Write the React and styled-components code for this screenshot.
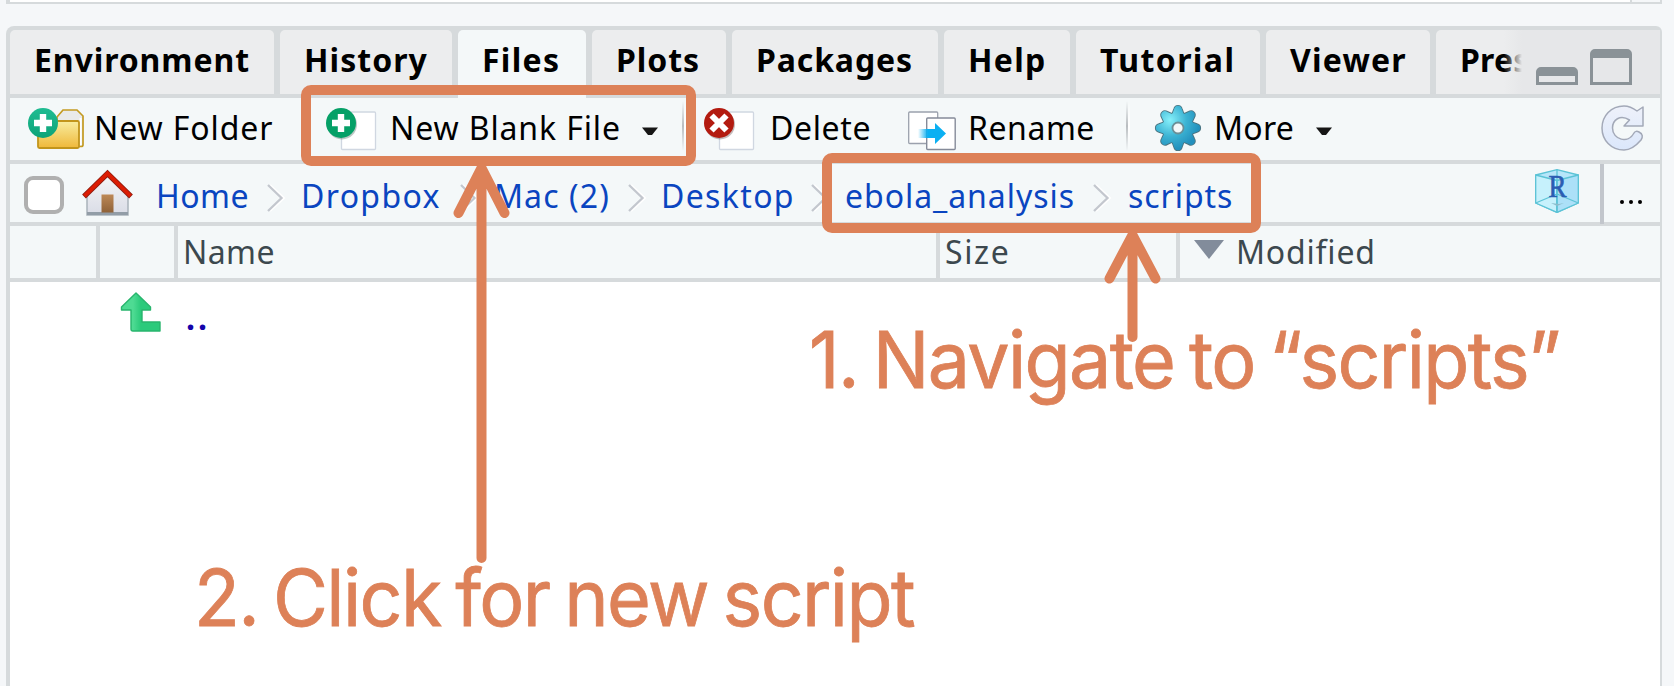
import React from 'react';
import styled, { createGlobalStyle, css } from 'styled-components';

const LINE = '#d6dadc';
const PANEL = '#f4f8f9';
const ORANGE = '#dd8158';

const GlobalStyle = createGlobalStyle`
  * { box-sizing: border-box; }
  body { margin: 0; overflow: hidden; background: #f5f7f9; }
`;

const Screen = styled.div`
  position: relative;
  width: 1674px;
  height: 686px;
  overflow: hidden;
  padding-left: 6px;
  font-family: 'Noto Sans', 'Open Sans', sans-serif;
  font-size: 32px;
  line-height: 44px;
  color: #000;
  background: #f5f7f9;
`;

const UpperPane = styled.div`
  display: flex;
  justify-content: flex-end;
  width: 1656px;
  height: 4px;
  margin-bottom: 22px;
  border: solid ${LINE};
  border-width: 0 2px 2px 4px;
  background: #fff;
`;

const ScrollGutter = styled.div`
  width: 30px;
  border-left: 2px solid ${LINE};
  background: #f5f7f9;
`;

const Pane = styled.section`
  display: flex;
  flex-direction: column;
  width: 1656px;
  height: 660px;
  border: solid ${LINE};
  border-width: 4px 2px 0 4px;
  border-radius: 8px 6px 0 0;
  background: #fff;
`;

const TabStrip = styled.nav`
  display: flex;
  flex: none;
  height: 68px;
  background: ${LINE};
`;

const Tab = styled.div`
  flex: none;
  width: ${p => p.$w}px;
  height: ${p => (p.$active ? 68 : 64)}px;
  margin-right: 6px;
  padding: 8px 0 0 ${p => p.$pad ?? 24}px;
  border-radius: 5px 5px 0 0;
  background: ${p => (p.$active ? PANEL : '#ecedee')};
  font-weight: 700;
  letter-spacing: ${p => p.$ls}px;
  white-space: nowrap;
`;

const WindowButtons = styled.div`
  position: relative;
  z-index: 1;
  display: flex;
  flex: none;
  align-items: flex-end;
  gap: 12px;
  width: 156px;
  height: 64px;
  margin-left: -44px;
  padding: 0 0 9px 32px;
  background: linear-gradient(90deg, #e6e7e900, #e6e7e9 18px);
`;

const WindowGlyph = styled.div`
  width: 42px;
  height: ${p => p.$h}px;
  border: 3px solid #8a9297;
  border-top-width: 9px;
  border-radius: 5px 5px 0 0;
`;

const bar = css`
  display: flex;
  flex: none;
  background: ${PANEL};
  border-bottom: 4px solid ${LINE};
`;

const Toolbar = styled.div`
  ${bar}
  height: 66px;
`;

const PathBar = styled.div`
  ${bar}
  height: 62px;
`;

const Slot = styled.div`
  flex: none;
  width: ${p => p.$w}px;
  padding-top: ${p => p.$top ?? 0}px;
  svg { display: block; overflow: visible; }
`;

const Label = styled.div`
  flex: none;
  width: ${p => p.$w}px;
  padding: 8px 0 0 1px;
  letter-spacing: ${p => p.$ls ?? 0.5}px;
  white-space: nowrap;
`;

const Crumb = styled(Label)`
  padding-top: 10px;
  color: #0a45c0;
`;

const Separator = styled.div`
  flex: none;
  width: 4px;
  height: 50px;
  margin: 3px ${p => p.$mr}px 0 0;
  background: linear-gradient(90deg, #b9bdc0 0 50%, #fff 50%);
  mask-image: linear-gradient(transparent, #000 50%, transparent);
`;

const CheckBox = styled.div`
  flex: none;
  width: 40px;
  height: 38px;
  margin: 12px 18px 0 14px;
  border: 4px solid #b0b0b0;
  border-radius: 9px;
  background: #fff;
`;

const Browse = styled.div`
  flex: none;
  display: flex;
  gap: 5px;
  width: 60px;
  height: 60px;
  padding: 36px 0 0 16px;
  border-left: 4px solid #c2c6cc;
`;

const Dot = styled.i`
  width: 4px;
  height: 4px;
  border-radius: 50%;
  background: #000;
`;

const HeaderRow = styled.div`
  ${bar}
  height: 56px;
  color: #3c484e;
`;

const HeaderCell = styled.div`
  display: flex;
  flex: none;
  gap: 12px;
  width: ${p => p.$w}px;
  padding: 4px 0 0 ${p => p.$pad ?? 5}px;
  border-right: ${p => (p.$last ? 0 : 4)}px solid ${LINE};
  letter-spacing: ${p => p.$ls ?? 0.4}px;
`;

const SortMark = styled.svg`
  display: block;
  margin-top: 10px;
`;

const FileRow = styled.div`
  display: flex;
  padding: 10px 0 0 111px;
  svg { display: block; overflow: visible; }
`;

const ParentLink = styled.span`
  margin: 4px 0 0 25px;
  color: #1404aa;
  font-weight: 700;
  letter-spacing: 3px;
`;

const MarkupLayer = styled.div`
  position: absolute;
  inset: 0;
  z-index: 5;
  pointer-events: none;
`;

const Arrows = styled.svg`
  position: absolute;
  inset: 0;
`;

const Note = styled.div`
  position: absolute;
  left: ${p => p.$x}px;
  top: ${p => p.$y}px;
  color: ${ORANGE};
  font: 400 78px/90px Inter, sans-serif;
  letter-spacing: -1.7px;
  word-spacing: -5px;
  white-space: nowrap;
  -webkit-text-stroke: 0.8px ${ORANGE};
  transform: scaleX(0.965);
  transform-origin: left;
`;

const tabs = [
  ['Environment', 264, 0.9],
  ['History', 172, 1.05],
  ['Files', 128, 1.3, true],
  ['Plots', 134, 0.95],
  ['Packages', 206, 0.87],
  ['Help', 126, 1.3],
  ['Tutorial', 184, 1.4],
  ['Viewer', 164, 1.2],
];

const AddBadge = ({ fill }) => (
  <g>
    <circle cx="15" cy="15" r="15" fill={fill} />
    <path d="M15 6v18M6 15h18" stroke="#fff" strokeWidth="6.4" />
  </g>
);

const FolderIcon = () => (
  <svg width="56" height="42" viewBox="0 0 56 42">
    <defs>
      <linearGradient id="folder" x2="0" y2="1"><stop stopColor="#f8eda0" /><stop offset="1" stopColor="#efb83a" /></linearGradient>
      <linearGradient id="addG" x2="0" y2="1"><stop stopColor="#1fbc92" /><stop offset="1" stopColor="#0da378" /></linearGradient>
    </defs>
    <path d="M29 9 35 2h14l6 6v29q0 1.500-2 1.500H29Z" fill="#e9eaea" stroke="#c49b22" strokeWidth="1.700" />
    <path d="M52.600 10v27" stroke="#fff" strokeWidth="2" />
    <rect x="10" y="13" width="41" height="27" rx="1.500" fill="url(#folder)" stroke="#c2951c" strokeWidth="1.800" />
    <AddBadge fill="url(#addG)" />
  </svg>
);

const PageBase = () => <rect x="15.500" y="4" width="34" height="37.500" rx="1" fill="#fff" stroke="#d0d7e1" strokeWidth="1.300" />;

const NewFileIcon = () => (
  <svg width="51" height="43" viewBox="0 0 51 43">
    <PageBase />
    <circle cx="16" cy="16.500" r="15" fill="#46605a" opacity=".35" />
    <AddBadge fill="#05a067" />
  </svg>
);

const DeleteIcon = () => (
  <svg width="51" height="43" viewBox="0 0 51 43">
    <PageBase />
    <circle cx="16" cy="16.500" r="15" fill="#5a4040" opacity=".35" />
    <circle cx="15" cy="15" r="15" fill="#b31b10" />
    <path d="m7.500 7.500 15 15m0-15-15 15" stroke="#fff" strokeWidth="6" />
  </svg>
);

const RenameIcon = () => (
  <svg width="48" height="40" viewBox="0 0 48 40">
    <defs><linearGradient id="fade"><stop stopColor="#0bb0f2" stopOpacity="0" /><stop offset=".35" stopColor="#0bb0f2" /></linearGradient></defs>
    <rect x=".700" y="1" width="29" height="31.500" rx="1" fill="#fff" stroke="#9ba1ad" strokeWidth="1.300" />
    <rect x="18.700" y="7" width="28.500" height="31.500" rx="1" fill="#fff" stroke="#858b99" strokeWidth="1.400" />
    <path d="M10 18h17v-6l11 10.500L27 33v-6H10Z" fill="url(#fade)" />
  </svg>
);

const GEAR_ANGLES = [0, 45, 90, 135, 180, 225, 270, 315];
const TOOTH = 'M17 10 19.200 4Q20 .800 23 .800T26.800 4L29 10Z';
const GearIcon = () => (
  <svg width="46" height="46" viewBox="0 0 46 46">
    <defs>
      <radialGradient id="gear" gradientUnits="userSpaceOnUse" cx="15" cy="15" r="30">
        <stop stopColor="#86f0fa" /><stop offset=".55" stopColor="#3cb3d3" /><stop offset="1" stopColor="#2390bd" />
      </radialGradient>
      <mask id="gearShape" maskUnits="userSpaceOnUse" x="0" y="0" width="46" height="46">
        <g fill="#fff">
          <circle cx="23" cy="23" r="15.500" />
          {GEAR_ANGLES.map(a => <path key={a} transform={`rotate(${a} 23 23)`} d={TOOTH} />)}
        </g>
      </mask>
    </defs>
    <g fill="none" stroke="#4b7480" strokeWidth="1.800">
      <circle cx="23" cy="23" r="15.500" />
      {GEAR_ANGLES.map(a => <path key={a} transform={`rotate(${a} 23 23)`} d={TOOTH} />)}
    </g>
    <rect width="46" height="46" fill="url(#gear)" mask="url(#gearShape)" />
    <circle cx="23" cy="23" r="5.500" fill="#f4f8f9" stroke="#6a8f97" strokeWidth="1.800" />
  </svg>
);

const RefreshIcon = () => (
  <svg width="44" height="46" viewBox="0 0 44 46">
    <defs><linearGradient id="ref" x2="0" y2="1"><stop stopColor="#eef1fa" /><stop offset="1" stopColor="#dbe7fb" /></linearGradient></defs>
    <path d="M42 2v19H23l5.500-6C19 9 11.500 15 11.500 23c0 12 16 16 21.500 5 1-2 3-2 5-1 4 2 4 5 2 8C34 42 29 45 23 45 10 45 1 35 1 23S10 1 23 1c5 0 9 2 13 5Z" fill="url(#ref)" stroke="#a3a9b8" strokeWidth="1.500" strokeLinejoin="round" />
  </svg>
);

const Caret = () => <svg width="16" height="9" viewBox="0 0 16 9"><path d="M0 .500h16L10 8H6Z" fill="#161616" /></svg>;

const Chevron = () => (
  <svg width="19" height="28" viewBox="0 0 19 28">
    <path d="M3 1 17 14 3 27" fill="none" stroke="#fff" strokeWidth="2" />
    <path d="M1 1 14.500 14 1 27" fill="none" stroke="#c3c7ce" strokeWidth="2.300" />
  </svg>
);

const HomeIcon = () => (
  <svg width="51" height="46" viewBox="0 0 51 46">
    <defs>
      <linearGradient id="wall" x2="0" y2="1"><stop stopColor="#f5f5f6" /><stop offset="1" stopColor="#d9dce6" /></linearGradient>
      <linearGradient id="door" x2="0" y2="1"><stop stopColor="#bd8856" /><stop offset="1" stopColor="#8f6238" /></linearGradient>
    </defs>
    <path d="M5 24 25.500 5 46 24v21H5Z" fill="url(#wall)" stroke="#a9b2ba" strokeWidth="1.500" />
    <path d="M5 43.500h41" stroke="#929da7" strokeWidth="3" />
    <rect x="19.500" y="24.500" width="12" height="18" fill="url(#door)" />
    <path d="M2 26.500 25.500 3.500 49 26.500" fill="none" stroke="#8e1d10" strokeWidth="5.400" />
    <path d="M2.500 26 25.500 3.500 48.500 26" fill="none" stroke="#dc1c03" strokeWidth="3.800" />
  </svg>
);

const ProjectIcon = () => (
  <svg width="44" height="44" viewBox="0 0 44 44">
    <g stroke="#5cc3d6" strokeWidth="1.300" strokeLinejoin="round">
      <path d="M22 .700 43.300 6v28L22 43.300.700 34V6Z" fill="#b6e6fa" />
      <path d="M.700 6 22 11.500V43.300L.700 34Z" fill="#c6f1fc" />
      <path d="M22 11.500 43.300 6v28L22 43.300Z" fill="#ace0f8" />
      <path d="M.700 34 22 25l21.300 9M22 .700v42" fill="none" />
    </g>
    <path d="m16 34 6 3 7-3-5 1Z" fill="#8bbccb" />
    <text x="22.500" y="28" textAnchor="middle" fontFamily="Liberation Serif, serif" fontSize="31" fill="#2b5db2" stroke="#2b5db2" strokeWidth=".7" textLength="18" lengthAdjust="spacingAndGlyphs">R</text>
  </svg>
);

const UpIcon = () => (
  <svg width="40" height="40" viewBox="0 0 40 40">
    <defs><linearGradient id="up"><stop offset=".3" stopColor="#4edb93" /><stop offset=".5" stopColor="#2bca7b" /></linearGradient></defs>
    <path d="M15 1 29.500 15v3H21v12h18v9H12q-2 0-2-2V18H.500v-3Z" fill="url(#up)" stroke="#28b56d" strokeWidth="1.400" strokeLinejoin="round" />
  </svg>
);

export default function App() {
  return (
    <Screen>
      <GlobalStyle />
      <UpperPane><ScrollGutter /></UpperPane>
      <Pane>
        <TabStrip>
          {tabs.map(([name, w, ls, active]) => (
            <Tab key={name} $w={w} $ls={ls} $active={active}>{name}</Tab>
          ))}
          <Tab $w={106} $ls={0.2}>Pres</Tab>
          <WindowButtons>
            <WindowGlyph $h={18} />
            <WindowGlyph $h={36} />
          </WindowButtons>
        </TabStrip>
        <Toolbar>
          <Slot $w={18} />
          <Slot $w={65} $top={10}><FolderIcon /></Slot>
          <Label $w={233} $ls={0.9}>New Folder</Label>
          <Slot $w={63} $top={10}><NewFileIcon /></Slot>
          <Label $w={253} $ls={0.88}>New Blank File</Label>
          <Slot $w={40} $top={29}><Caret /></Slot>
          <Separator $mr={18} />
          <Slot $w={65} $top={10}><DeleteIcon /></Slot>
          <Label $w={139} $ls={0.65}>Delete</Label>
          <Slot $w={59} $top={13}><RenameIcon /></Slot>
          <Label $w={159} $ls={0.55}>Rename</Label>
          <Separator $mr={25} />
          <Slot $w={58} $top={7}><GearIcon /></Slot>
          <Label $w={103} $ls={0.3}>More</Label>
          <Slot $w={285} $top={29}><Caret /></Slot>
          <Slot $w={44} $top={7}><RefreshIcon /></Slot>
        </Toolbar>
        <PathBar>
          <CheckBox />
          <Slot $w={73} $top={6}><HomeIcon /></Slot>
          <Crumb $w={112}>Home</Crumb>
          <Slot $w={33} $top={20}><Chevron /></Slot>
          <Crumb $w={160} $ls={1.35}>Dropbox</Crumb>
          <Slot $w={33} $top={20}><Chevron /></Slot>
          <Crumb $w={135} $ls={1.1}>Mac (2)</Crumb>
          <Slot $w={32} $top={20}><Chevron /></Slot>
          <Crumb $w={151} $ls={1.35}>Desktop</Crumb>
          <Slot $w={33} $top={20}><Chevron /></Slot>
          <Crumb $w={249} $ls={0.95}>ebola_analysis</Crumb>
          <Slot $w={34} $top={20}><Chevron /></Slot>
          <Crumb $w={408} $ls={0.95}>scripts</Crumb>
          <Slot $w={65} $top={5}><ProjectIcon /></Slot>
          <Browse><Dot /><Dot /><Dot /></Browse>
        </PathBar>
        <HeaderRow>
          <HeaderCell $w={90} />
          <HeaderCell $w={78} />
          <HeaderCell $w={762}>Name</HeaderCell>
          <HeaderCell $w={240} $ls={1.6}>Size</HeaderCell>
          <HeaderCell $w={480} $pad={14} $ls={0.8} $last>
            <SortMark width="30" height="20" viewBox="0 0 30 20"><path d="M0 0h30L15 19Z" fill="#828c9b" /></SortMark>
            Modified
          </HeaderCell>
        </HeaderRow>
        <FileRow>
          <UpIcon />
          <ParentLink>..</ParentLink>
        </FileRow>
      </Pane>
      <MarkupLayer>
        <Arrows width="1674" height="686" fill="none" stroke={ORANGE} strokeWidth="10" strokeLinecap="round" strokeLinejoin="round">
          <rect x="306" y="90" width="385" height="71" rx="5" />
          <rect x="827" y="158" width="429" height="70" rx="5" />
          <path d="M481.500 168V558M458.500 213 481.500 168 504.500 213" />
          <path d="M1132.500 236V337M1109.500 278.500 1132.500 235 1155.500 278.500" />
        </Arrows>
        <Note $x={809} $y={315}>1. Navigate to “scripts”</Note>
        <Note $x={194} $y={553}>2. Click for new script</Note>
      </MarkupLayer>
    </Screen>
  );
}
